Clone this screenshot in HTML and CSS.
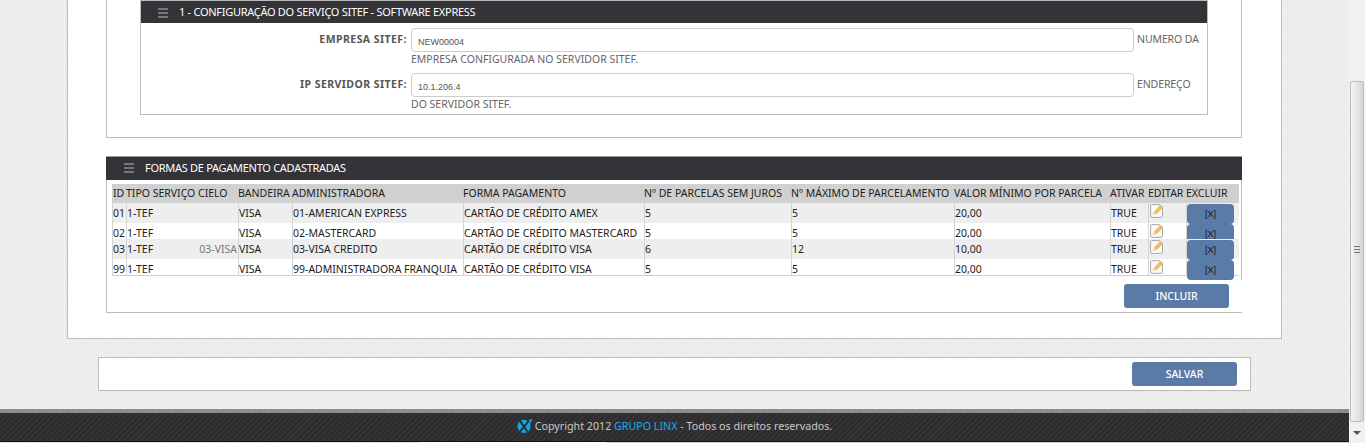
FILE: index.html
```html
<!DOCTYPE html>
<html lang="pt">
<head>
<meta charset="utf-8">
<title>Configuração SITEF</title>
<link rel="stylesheet" href="styles.css">
</head>
<body>
<div class="app">
  <div class="main">
    <div class="outer">
      <section class="section upper">
        <div class="subpanel">
          <h3 class="bar subbar"><span class="burger"><i></i><i></i><i></i></span><span>1 - CONFIGURAÇÃO DO SERVIÇO SITEF - SOFTWARE EXPRESS</span></h3>
          <div class="field">
            <label class="label">EMPRESA SITEF:</label>
            <div class="control">
              <div class="line"><input class="input" value="NEW00004"><span class="help side">NUMERO DA</span></div>
              <div class="help second">EMPRESA CONFIGURADA NO SERVIDOR SITEF.</div>
            </div>
          </div>
          <div class="field">
            <label class="label">IP SERVIDOR SITEF:</label>
            <div class="control">
              <div class="line"><input class="input" value="10.1.206.4"><span class="help side">ENDEREÇO</span></div>
              <div class="help second">DO SERVIDOR SITEF.</div>
            </div>
          </div>
        </div>
      </section>
      <section class="section lower">
        <h3 class="bar mainbar"><span class="burger"><i></i><i></i><i></i></span><span>FORMAS DE PAGAMENTO CADASTRADAS</span></h3>
        <div class="tablewrap">
          <table class="grid">
            <colgroup>
              <col class="c1"><col class="c2"><col class="c3"><col class="c4"><col class="c5"><col class="c6"><col class="c7"><col class="c8"><col class="c9"><col class="c10"><col class="c11">
            </colgroup>
            <thead>
              <tr><th>ID</th><th>TIPO SERVIÇO CIELO</th><th>BANDEIRA</th><th>ADMINISTRADORA</th><th>FORMA PAGAMENTO</th><th>Nº DE PARCELAS SEM JUROS</th><th>Nº MÁXIMO DE PARCELAMENTO</th><th>VALOR MÍNIMO POR PARCELA</th><th>ATIVAR</th><th>EDITAR</th><th>EXCLUIR</th></tr>
            </thead>
            <tbody>
              <tr class="tall odd"><td>01</td><td>1-TEF</td><td>VISA</td><td>01-AMERICAN EXPRESS</td><td>CARTÃO DE CRÉDITO AMEX</td><td>5</td><td>5</td><td>20,00</td><td>TRUE</td><td class="act"><svg class="edit" viewBox="0 0 14 14"><use href="#ed"/></svg></td><td class="act"><button class="xbtn">[X]</button></td></tr>
              <tr class="short"><td>02</td><td>1-TEF</td><td>VISA</td><td>02-MASTERCARD</td><td>CARTÃO DE CRÉDITO MASTERCARD</td><td>5</td><td>5</td><td>20,00</td><td>TRUE</td><td class="act"><svg class="edit" viewBox="0 0 14 14"><use href="#ed"/></svg></td><td class="act"><button class="xbtn">[X]</button></td></tr>
              <tr class="tall odd"><td>03</td><td><div class="split"><span>1-TEF</span><span class="muted">03-VISA</span></div></td><td>VISA</td><td>03-VISA CREDITO</td><td>CARTÃO DE CRÉDITO VISA</td><td>6</td><td>12</td><td>10,00</td><td>TRUE</td><td class="act"><svg class="edit" viewBox="0 0 14 14"><use href="#ed"/></svg></td><td class="act"><button class="xbtn">[X]</button></td></tr>
              <tr class="short"><td>99</td><td>1-TEF</td><td>VISA</td><td>99-ADMINISTRADORA FRANQUIA</td><td>CARTÃO DE CRÉDITO VISA</td><td>5</td><td>5</td><td>20,00</td><td>TRUE</td><td class="act"><svg class="edit" viewBox="0 0 14 14"><use href="#ed"/></svg></td><td class="act"><button class="xbtn">[X]</button></td></tr>
            </tbody>
          </table>
        </div>
        <div class="actions"><button class="btn">INCLUIR</button></div>
      </section>
    </div>
    <div class="savebar"><button class="btn">SALVAR</button></div>
    <footer class="footer">
      <svg class="logo" viewBox="0 0 16 14" aria-hidden="true">
        <circle cx="7" cy="7.4" r="6.6" fill="#12a5e6"/>
        <path d="M11 1 L15.8 .2 L12.6 5.4 Z" fill="#12a5e6"/>
        <path d="M2.8 1.6 L10.4 12.8 M12 1.6 L3 12.6" stroke="#2e2e30" stroke-width="2" fill="none"/>
      </svg>
      <span>Copyright 2012 <a class="flink">GRUPO LINX</a> - Todos os direitos reservados.</span>
    </footer>
    <div class="behind"></div>
  </div>
  <div class="scrollbar">
    <div class="track"></div>
    <div class="thumb"><span class="grip"></span></div>
    <div class="arrow"><span class="tri"></span></div>
  </div>
</div>
<svg class="defs" aria-hidden="true">
  <symbol id="ed" viewBox="0 0 14 14">
    <path d="M1.6 .6 H9 L12.5 3.5 V12 Q12.5 13.4 11.2 13.4 H1.9 Q.6 13.4 .6 12 V1.8 Q.6 .6 1.6 .6Z" fill="#fafafa" stroke="#a8a8a8" stroke-width="1"/>
    <path d="M3.4 10.6 L4.2 8 L10.4 1.2 L13 3.4 L6.2 10 Z" fill="#f2bf55" stroke="#d9a33a" stroke-width=".5"/>
    <path d="M3.4 10.6 L4.2 8 L6.2 10 Z" fill="#f8e8c6"/>
  </symbol>
</svg>
</body>
</html>
```
FILE: styles.css
```css
* { box-sizing: border-box; }
html, body { margin: 0; padding: 0; height: 443px; overflow: hidden; }
body { font-family: "Noto Sans", "Liberation Sans", sans-serif; font-size: 11px; color: #333; }
h3 { margin: 0; font-weight: 400; }
.defs { width: 0; height: 0; display: block; }

.app { display: flex; height: 443px; }
.main {
  width: 1349px;
  flex: none;
  display: flex;
  flex-direction: column;
  background-color: #ededed;
  background-image: conic-gradient(#f1f1f1 25%, #e9e9e9 25% 50%, #f1f1f1 50% 75%, #e9e9e9 75%);
  background-size: 3px 3px;
}

.outer {
  width: 1215px;
  height: 339px;
  margin-left: 67px;
  padding: 0 39px 25px 38px;
  background: #fff;
  border: 1px solid #bbb;
  border-top: 0;
}
.section { width: 1136px; border-bottom: 1px solid #bbb; border-left: 1px solid #bbb; }
.upper { padding: 0 33px 22px; border-right: 1px solid #bbb; height: 138px; }
.lower { margin-top: 18px; height: 157px; border-top: 1px solid #999; }

.subpanel { height: 115px; border: 1px solid #bbb; }
.bar {
  display: flex;
  align-items: center;
  color: #fff;
  background: #333338;
  font-size: 11px;
  letter-spacing: -.28px;
}
.subbar { height: 22px; padding: 0 0 1px 17px; }
.mainbar { height: 23px; margin-left: -1px; padding: 0 0 3px 18px; }
.burger { display: flex; flex-direction: column; gap: 2px; width: 10px; margin: 2px 11px 0 0; }
.burger i { display: block; height: 2px; background: #77777a; }

.field { display: flex; height: 45px; padding-top: 5px; }
.label {
  width: 270px;
  padding-right: 4px;
  flex: none;
  text-align: right;
  font-weight: 700;
  font-size: 10.5px;
  line-height: 22px;
  color: #555;
  letter-spacing: .45px;
}
.control { flex: 1; }
.line { display: flex; align-items: center; height: 24px; }
.input {
  width: 723px;
  height: 24px;
  padding: 3px 6px 0;
  border: 1px solid #ccc;
  border-radius: 4px;
  background: #fff;
  font: 9px "Liberation Sans", sans-serif;
  color: #555;
  outline: 0;
}
.help { font-size: 10.5px; color: #666; line-height: 14px; }
.side { padding: 0 0 2px 3px; letter-spacing: -.1px; }

.tablewrap { height: 100px; padding: 4px 2px 0 5px; border-right: 1px solid #bbb; }
.grid { width: 1127px; table-layout: fixed; border-collapse: separate; border-spacing: 0; border-bottom: 1px solid #d0d0d0; color: #1c1c22; font-size: 10.5px; }
.c1 { width: 14px; } .c2 { width: 112px; } .c3 { width: 54px; } .c4 { width: 171px; }
.c5 { width: 181px; } .c6 { width: 147px; } .c7 { width: 163px; } .c8 { width: 156px; }
.c9 { width: 38px; } .c10 { width: 38px; } .c11 { width: 53px; }
th { height: 19px; padding: 0; background: #d0d0d0; font-weight: 400; text-align: left; white-space: nowrap; line-height: 19px; }
th:first-child { padding-left: 1px; }
td { padding: 4px 0 0 0; line-height: 12px; vertical-align: top; border-left: 1px solid #d4d4d4; white-space: nowrap; }
.tall td { height: 20px; }
.short td { height: 16px; }
.odd td { background: #eee; }
.split { display: flex; justify-content: space-between; padding-right: 1px; }
.muted { color: #777; }
td.act { padding: 1px 0 0 0; }
.edit { display: block; width: 14px; height: 14px; margin: 0 0 -14px 1px; }
.xbtn {
  display: block;
  width: 47px;
  height: 20px;
  margin-bottom: -20px;
  padding: 0;
  border: 0;
  border-radius: 4px;
  background: #5a7ba7;
  color: #14141a;
  font: 9px "Liberation Sans", sans-serif;
}

.actions { display: flex; justify-content: flex-end; padding: 4px 13px 0 0; }
.btn {
  width: 105px;
  height: 24px;
  padding: 0;
  border: 0;
  border-radius: 3px;
  background: #5a7ba7;
  color: #fff;
  font: 500 10.5px "Noto Sans", sans-serif;
}

.savebar {
  width: 1153px;
  height: 34px;
  margin: 18px 0 0 98px;
  padding: 4px 13px 0 0;
  display: flex;
  justify-content: flex-end;
  background: #fff;
  border: 1px solid #bbb;
  flex: none;
}

.footer {
  flex: none;
  height: 32px;
  margin-top: 18px;
  padding-bottom: 2px;
  display: flex;
  align-items: center;
  justify-content: center;
  gap: 2px;
  border-top: 4px solid #8c8c8c;
  background: repeating-linear-gradient(135deg, #2c2c2e 0 2px, #343436 2px 4px);
  color: #c8c8c8;
  font-size: 10.7px;
}
.flink { color: #18aeee; }
.logo { width: 16px; height: 14px; display: block; }
.behind { flex: none; height: 2px; background: linear-gradient(90deg, #dfe5e5 0 31%, #fff 31% 45%, #d8d2c4 45%); border-top: 1px solid #111; }

.scrollbar { flex: none; width: 16px; display: flex; flex-direction: column; background: #f1f1f1; }
.track { height: 81px; }
.thumb {
  height: 341px;
  margin-left: 1px;
  width: 14px;
  display: flex;
  align-items: center;
  justify-content: center;
  padding-bottom: 4px;
  border: 1px solid #bdbdbd;
  border-radius: 2px;
  background: linear-gradient(90deg, #f4f4f4, #d6d6d6);
}
.grip { display: block; width: 6px; height: 7px; background: repeating-linear-gradient(180deg, #777 0 1px, transparent 1px 3px); }
.arrow { flex: none; height: 21px; display: flex; align-items: center; justify-content: center; }
.tri { width: 0; height: 0; border: 4px solid transparent; border-top: 4px solid #555; border-bottom: 0; }
```
